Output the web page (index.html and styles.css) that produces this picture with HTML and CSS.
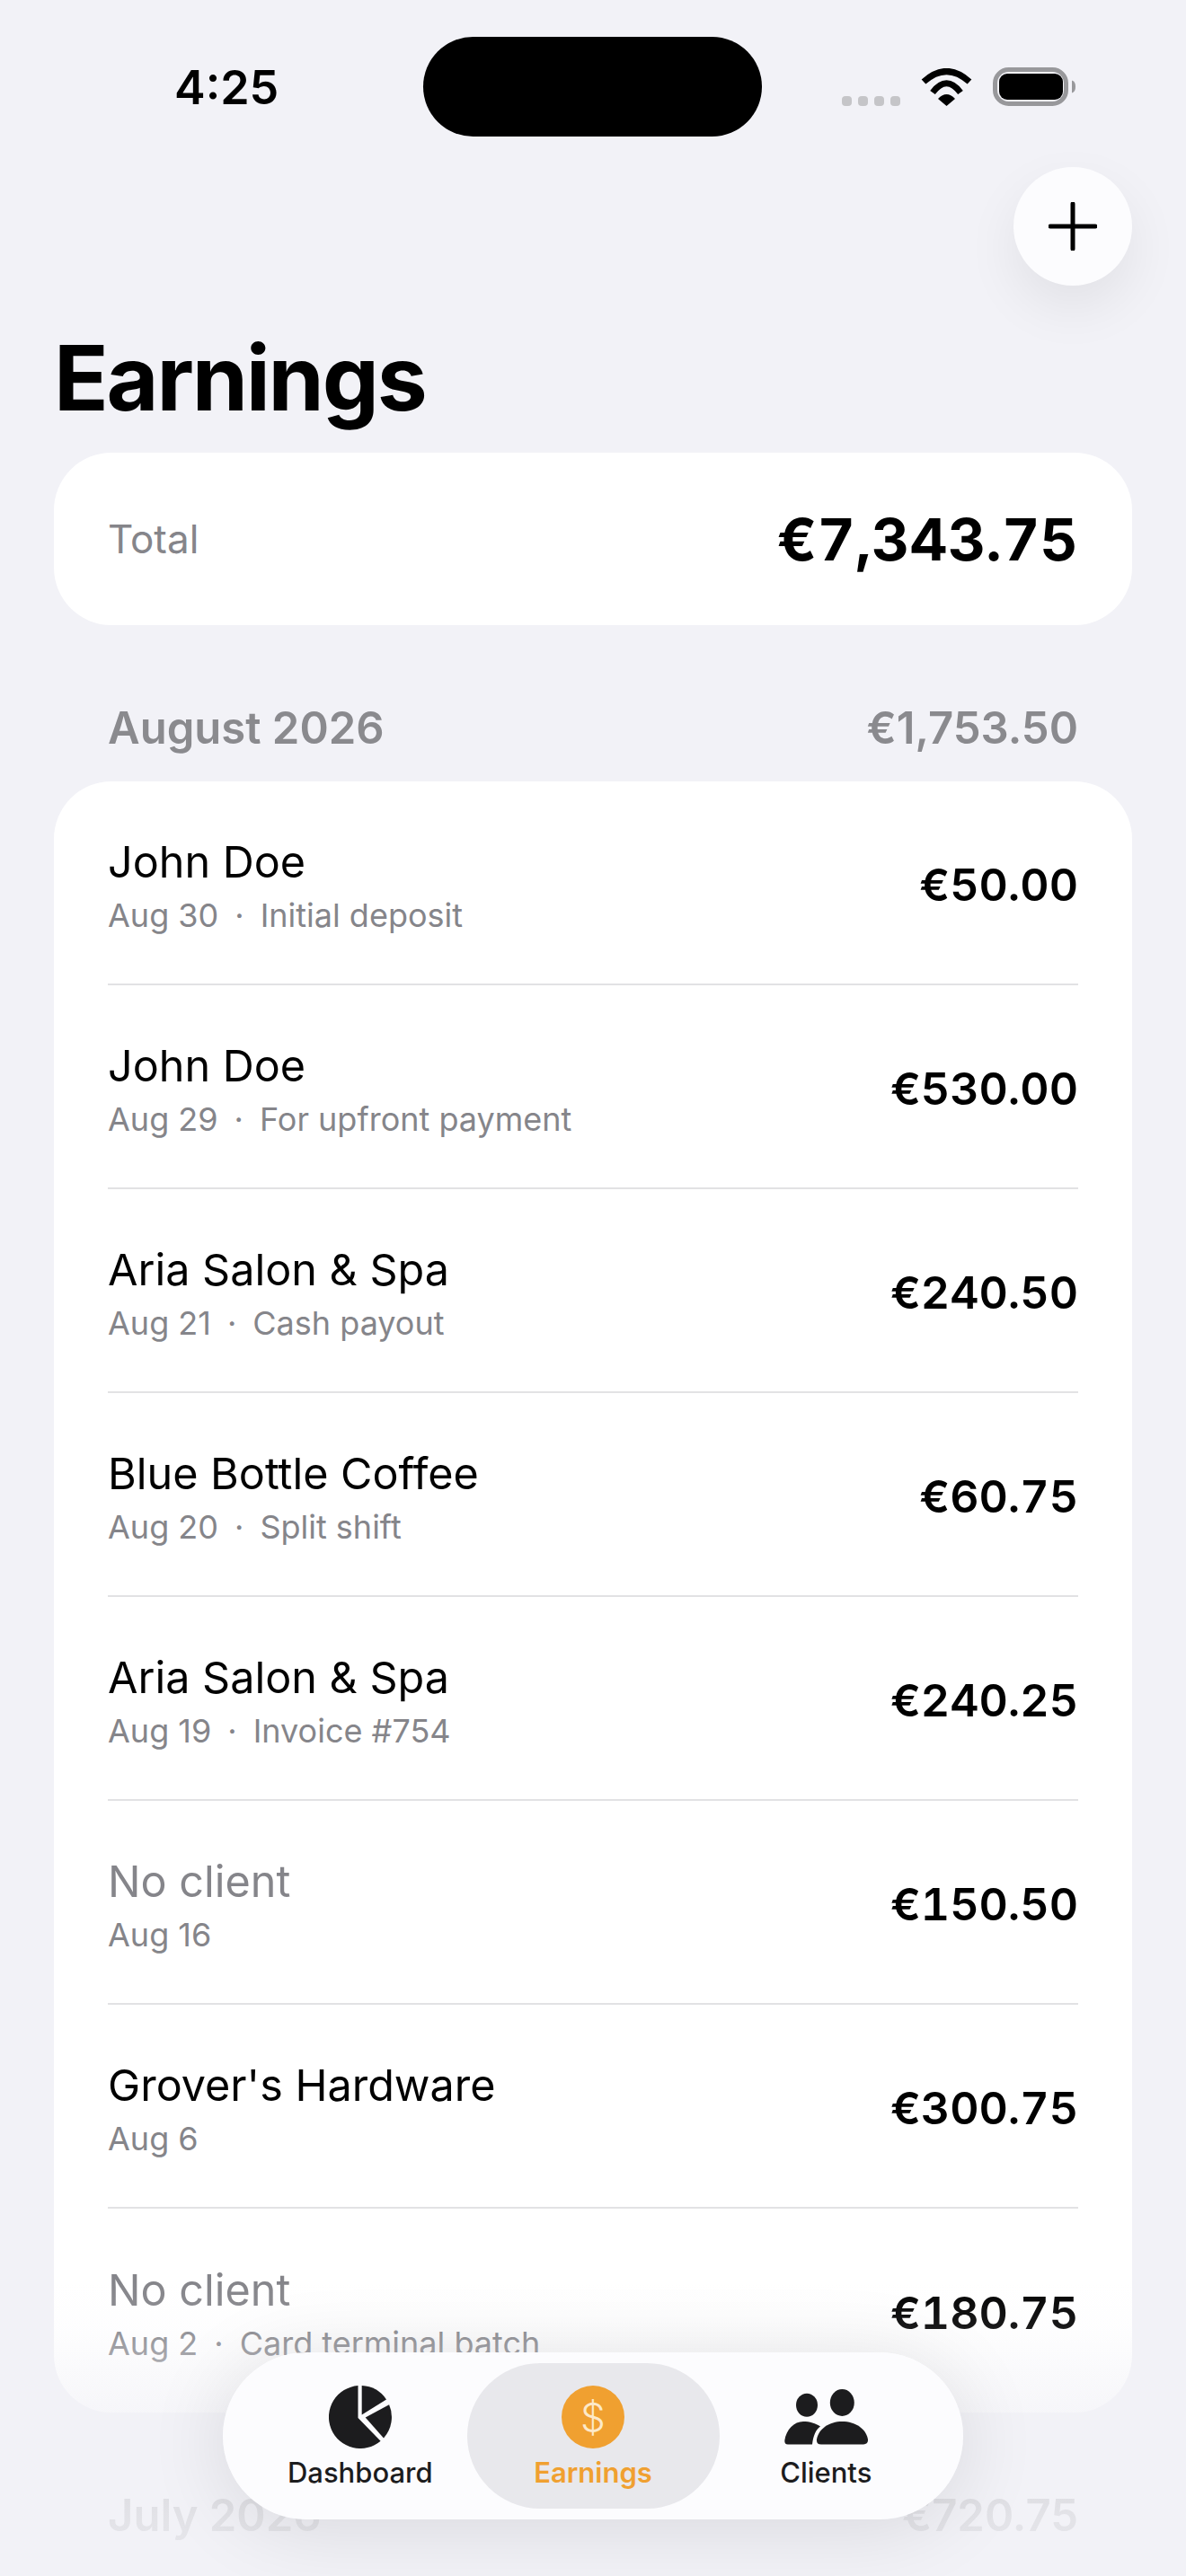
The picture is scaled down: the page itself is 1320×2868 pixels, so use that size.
FILE: index.html
```html
<!DOCTYPE html>
<html lang="en">

<head>
  <meta charset="UTF-8" />
  <meta name="viewport" content="width=device-width, initial-scale=1.0" />
  <title>Earnings</title>
  <link rel="stylesheet" href="styles.css">
</head>

<body>
  <div class="screen">
    <div class="status-bar">
      <span class="status-time">4:25</span>
      <div class="island"></div>
      <div class="status-icons">
        <div class="cell-dots"><i></i><i></i><i></i><i></i></div>
        <svg class="wifi" width="57" height="42" viewBox="0 0 57 42">
          <path d="M3 15Q28.5 -8 54 15" fill="none" stroke="#000" stroke-width="7" />
          <path d="M13 27Q28.5 6.6 44 27" fill="none" stroke="#000" stroke-width="7" />
          <path d="M28.5 42L19 34Q28.5 24 38 34Z" fill="#000" />
        </svg>
        <svg class="battery" width="92" height="43" viewBox="0 0 92 43">
          <rect x="2.5" y="2.5" width="79" height="38" rx="15" fill="none" stroke="#98989b" stroke-width="5" />
          <rect x="7" y="7" width="71" height="29" rx="9" fill="#000" />
          <path d="M88 14.5C91 15.5 92 18 92 21.500C92 25 91 27.500 88 28.500Z" fill="#98989b" />
        </svg>
      </div>
    </div>

    <div class="action-row">
      <button class="add-btn">
        <svg width="54" height="54" viewBox="0 0 54 54">
          <path d="M27 2V52M2 27H52" fill="none" stroke="#000" stroke-width="5" stroke-linecap="round" />
        </svg>
      </button>
    </div>

    <h1 class="page-title">Earnings</h1>

    <div class="card total-card">
      <span class="total-label">Total</span>
      <span class="total-value">€7,343.75</span>
    </div>

    <div class="month-head">
      <span>August 2026</span>
      <span>€1,753.50</span>
    </div>

    <div class="card list-card">
      <div class="row">
        <div class="row-text">
          <div class="row-title">John Doe</div>
          <div class="row-sub">Aug 30<b>·</b>Initial deposit</div>
        </div>
        <div class="row-amount">€50.00</div>
      </div>
      <div class="row">
        <div class="row-text">
          <div class="row-title">John Doe</div>
          <div class="row-sub">Aug 29<b>·</b>For upfront payment</div>
        </div>
        <div class="row-amount">€530.00</div>
      </div>
      <div class="row">
        <div class="row-text">
          <div class="row-title">Aria Salon &amp; Spa</div>
          <div class="row-sub">Aug 21<b>·</b>Cash payout</div>
        </div>
        <div class="row-amount">€240.50</div>
      </div>
      <div class="row">
        <div class="row-text">
          <div class="row-title">Blue Bottle Coffee</div>
          <div class="row-sub">Aug 20<b>·</b>Split shift</div>
        </div>
        <div class="row-amount">€60.75</div>
      </div>
      <div class="row">
        <div class="row-text">
          <div class="row-title">Aria Salon &amp; Spa</div>
          <div class="row-sub">Aug 19<b>·</b>Invoice #754</div>
        </div>
        <div class="row-amount">€240.25</div>
      </div>
      <div class="row">
        <div class="row-text">
          <div class="row-title muted">No client</div>
          <div class="row-sub">Aug 16</div>
        </div>
        <div class="row-amount">€150.50</div>
      </div>
      <div class="row">
        <div class="row-text">
          <div class="row-title">Grover's Hardware</div>
          <div class="row-sub">Aug 6</div>
        </div>
        <div class="row-amount">€300.75</div>
      </div>
      <div class="row">
        <div class="row-text">
          <div class="row-title muted">No client</div>
          <div class="row-sub">Aug 2<b>·</b>Card terminal batch</div>
        </div>
        <div class="row-amount">€180.75</div>
      </div>
    </div>

    <div class="month-head">
      <span>July 2026</span>
      <span>€720.75</span>
    </div>

    <div class="bottom-fade"></div>

    <div class="tab-bar">
      <div class="tab tab-left">
        <svg width="70" height="70" viewBox="0 0 70 70">
          <path d="M32.500 0.100A35 35 0 1 0 57.600 61.700L32.500 36Z" fill="#1c1c1e" />
          <path d="M36.700 0.050V32.500L64 15.400A35 35 0 0 0 36.700 0.050Z" fill="#1c1c1e" />
          <path d="M67.100 21.200L40.700 35.600L61 58.400A35 35 0 0 0 67.100 21.200Z" fill="#1c1c1e" />
        </svg>
        <span class="tab-label">Dashboard</span>
      </div>
      <div class="tab active">
        <div class="coin">$</div>
        <span class="tab-label">Earnings</span>
      </div>
      <div class="tab tab-right">
        <svg class="clients-icon" width="93" height="62" viewBox="0 0 93 62">
          <ellipse cx="64.300" cy="15" rx="13.500" ry="15" fill="#1c1c1e" />
          <ellipse cx="25" cy="17.700" rx="12" ry="13" fill="#1c1c1e" />
          <path d="M41 61.500Q35.500 61.500 36 56C38 44 50 36 64.300 36C79 36 91 44 93 56Q93.300 61.500 88 61.500Z" fill="#1c1c1e" />
          <path d="M4 61.500Q0 61.500 0.300 57C2 45 11 36 21 36C28 36 35 38 40 41.500C35 45 32 52 31 61.500Z" fill="#1c1c1e" />
        </svg>
        <span class="tab-label">Clients</span>
      </div>
    </div>
  </div>
</body>

</html>
```

FILE: styles.css
```css
/* Base */
* {
  box-sizing: border-box;
  margin: 0;
  padding: 0;
}

body {
  width: 1320px;
  height: 2868px;
  overflow: hidden;
  background-color: #f2f2f7;
  font-family: Inter, 'Noto Sans', sans-serif;
  color: #000;
}

.screen {
  position: relative;
  width: 1320px;
  height: 2868px;
  overflow: hidden;
}

/* Status bar */
.status-bar {
  display: flex;
  align-items: flex-start;
  height: 186px;
  padding: 41px 0 0 194px;
}

.status-time {
  width: 277px;
  margin-top: 29px;
  font-size: 52px;
  line-height: 56px;
  font-weight: 600;
}

.island {
  width: 377px;
  height: 111px;
  border-radius: 56px;
  background-color: #000;
}

.status-icons {
  display: flex;
  align-items: flex-end;
  margin-top: 34px;
  margin-left: 89px;
}

.cell-dots {
  display: flex;
  gap: 7px;
  width: 88px;
}

.cell-dots i {
  width: 11px;
  height: 11px;
  border-radius: 4px;
  background-color: #c5c5c8;
}

.wifi {
  display: block;
}

.battery {
  display: block;
  margin-left: 23px;
}

/* Add button */
.action-row {
  display: flex;
  justify-content: flex-end;
  padding-right: 60px;
}

.add-btn {
  display: flex;
  align-items: center;
  justify-content: center;
  width: 132px;
  height: 132px;
  border: none;
  border-radius: 50%;
  background-color: #fcfcfe;
  box-shadow: 0 24px 60px rgba(0, 0, 0, 0.07);
}

/* Title */
.page-title {
  margin-top: 48px;
  margin-bottom: 28px;
  padding-left: 60px;
  font-size: 100px;
  line-height: 110px;
  font-weight: 700;
  letter-spacing: -2.2px;
}

/* Cards */
.card {
  margin: 0 60px;
  background-color: #fff;
}

.total-card {
  display: flex;
  align-items: center;
  justify-content: space-between;
  height: 192px;
  padding: 0 60px;
  border-radius: 64px;
}

.total-label {
  font-size: 44px;
  color: #85858a;
}

.total-value {
  font-size: 65px;
  font-weight: 700;
  font-variant-numeric: tabular-nums;
  letter-spacing: 0.4px;
}

.month-head {
  display: flex;
  align-items: center;
  justify-content: space-between;
  padding: 85px 120px 29px;
  font-size: 49px;
  line-height: 60px;
  font-weight: 600;
  color: #8a8a8e;
}

.list-card {
  border-radius: 64px;
  padding: 0 60px;
}

.row {
  display: flex;
  align-items: center;
  justify-content: space-between;
  height: 227px;
  border-bottom: 2px solid #e2e2e4;
}

.row:last-child {
  border-bottom: none;
}

.row-text {
  padding-top: 5px;
}

.row-title {
  font-size: 48.500px;
  line-height: 60px;
}

.row-title.muted {
  color: #85858a;
}

.row-sub {
  margin-top: 7px;
  font-size: 36px;
  line-height: 44px;
  color: #85858a;
}

.row-sub b {
  margin: 0 18px;
  font-weight: 400;
}

.row-amount {
  padding-top: 4px;
  font-size: 50px;
  font-weight: 600;
  font-variant-numeric: tabular-nums;
}

/* Fade under the tab bar */
.bottom-fade {
  position: absolute;
  left: 0;
  right: 0;
  top: 2540px;
  bottom: 0;
  background: linear-gradient(to bottom, rgba(242, 242, 247, 0) 0, rgba(242, 242, 247, 0.1) 50px, rgba(242, 242, 247, 0.65) 140px, rgba(242, 242, 247, 0.85) 260px, rgba(242, 242, 247, 0.9) 100%);
}

/* Tab bar */
.tab-bar {
  position: absolute;
  left: 248px;
  top: 2619px;
  display: flex;
  width: 824px;
  height: 186px;
  padding: 12px;
  border-radius: 93px;
  background-color: rgba(252, 252, 254, 0.98);
  box-shadow: 0 8px 90px rgba(0, 0, 0, 0.11);
}

.tab {
  display: flex;
  flex-direction: column;
  align-items: center;
  justify-content: flex-start;
  flex: 1;
  padding-top: 25px;
  border-radius: 81px;
}

.tab-left {
  padding-left: 22px;
}

.tab-right {
  padding-right: 22px;
}

.tab.active {
  flex: 0 0 281px;
  background-color: #e8e8ec;
}

.tab-label {
  margin-top: 7px;
  font-size: 31px;
  line-height: 40px;
  font-weight: 500;
  color: #1c1c1e;
}

.tab.active .tab-label {
  font-weight: 600;
  color: #f0a030;
}

.coin {
  display: flex;
  align-items: center;
  justify-content: center;
  width: 70px;
  height: 70px;
  border-radius: 50%;
  background-color: #f0a030;
  font-size: 44px;
  font-weight: 300;
  color: #fde9c8;
}

.clients-icon {
  margin-top: 4px;
  margin-bottom: 4px;
}
```
